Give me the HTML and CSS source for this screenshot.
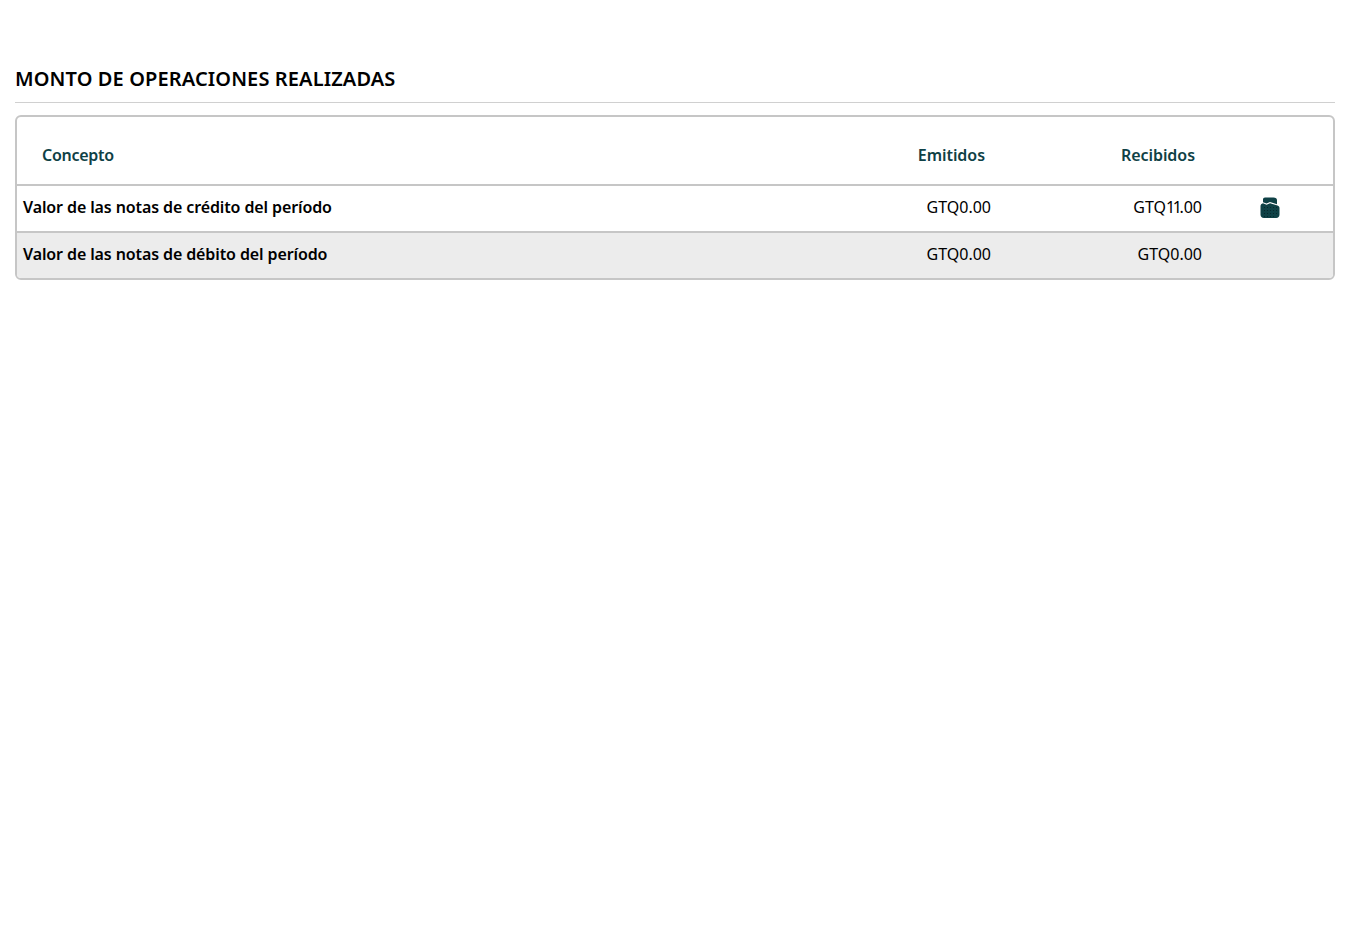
FILE: index.html
```html
<!DOCTYPE html>
<html lang="es">
<head>
<meta charset="utf-8">
<title>Monto de operaciones realizadas</title>
<link rel="stylesheet" href="styles.css">
</head>
<body>
<main class="page">
  <h2 class="title">MONTO DE OPERACIONES REALIZADAS</h2>
  <div class="card">
    <div class="row head">
      <div class="c-name">Concepto</div>
      <div class="c-em">Emitidos</div>
      <div class="c-re">Recibidos</div>
      <div class="c-ic"></div>
    </div>
    <div class="row">
      <div class="c-name">Valor de las notas de crédito del período</div>
      <div class="c-em">GTQ0.00</div>
      <div class="c-re">GTQ<span class="kern">11</span>.00</div>
      <div class="c-ic">
        <svg class="icon" viewBox="0 0 20 22" width="20" height="22" aria-hidden="true">
          <defs>
            <pattern id="stipple" width="3" height="3" patternUnits="userSpaceOnUse">
              <rect class="icon-dot" x="1" y="1" width="1" height="1"/>
            </pattern>
          </defs>
          <path class="icon-fill" d="M5 .5h8.5c2.2 0 3.5 1 3.5 2.8v4L10 5 6.5 6.6 3 5.2V2.6C3 1.2 3.8.5 5 .5z"/>
          <path class="icon-fill" d="M3 6.2l3.6 1.5L10 6.2l7.5 2.2c1.3.4 2 1.2 2 2.6v6.5c0 2.2-1.3 3.5-3.3 3.5H4c-2.2 0-3.5-1.3-3.5-3.5V9.2C.5 7.6 1.4 6.6 3 6.2z"/>
          <path class="icon-dots" d="M4 9l6-1 7 2v8l-2 2H4l-2-2v-7z"/>
        </svg>
      </div>
    </div>
    <div class="row alt">
      <div class="c-name">Valor de las notas de débito del período</div>
      <div class="c-em">GTQ0.00</div>
      <div class="c-re">GTQ0.00</div>
      <div class="c-ic"></div>
    </div>
  </div>
</main>
</body>
</html>
```
FILE: styles.css
```css
html, body { margin: 0; background: #fff; }
body { font-family: "Noto Sans", "Open Sans", sans-serif; color: #000; }
.page { padding: 67px 24px 0 15px; }
.title {
  margin: 0 0 12px;
  padding-bottom: 11px;
  border-bottom: 1px solid #d0d0d0;
  font-size: 20px;
  line-height: 24px;
  font-weight: 600;
  letter-spacing: 0.12px;
}
.card {
  border: 2px solid #c6c6c6;
  border-radius: 6px;
  overflow: hidden;
}
.row {
  display: grid;
  grid-template-columns: 906px 68px 211px 1fr;
  align-items: center;
  height: 41px;
  padding-bottom: 4px;
  border-top: 2px solid #c6c6c6;
  font-size: 16px;
}
.row.alt { background: #ececec; }
.row .c-name { padding-left: 6px; font-weight: 600; letter-spacing: -0.11px; white-space: nowrap; }
.c-em, .c-re { text-align: right; white-space: nowrap; }
.kern { letter-spacing: -2.5px; }
.c-ic { padding-left: 58px; display: flex; position: relative; top: 1px; }
.head {
  height: 59px;
  padding: 8px 0 0;
  border-top: 0;
  color: #0f4146;
  font-weight: 600;
}
.row.head .c-name { padding-left: 25px; font-weight: 600; letter-spacing: -0.27px; }
.head .c-em, .head .c-re { position: relative; left: -6px; letter-spacing: -0.05px; }
.head .c-re { left: -7px; }
.icon-fill { fill: #0f4146; }
.icon-dot { fill: #08282c; }
.icon-dots { fill: url(#stipple); }
```
